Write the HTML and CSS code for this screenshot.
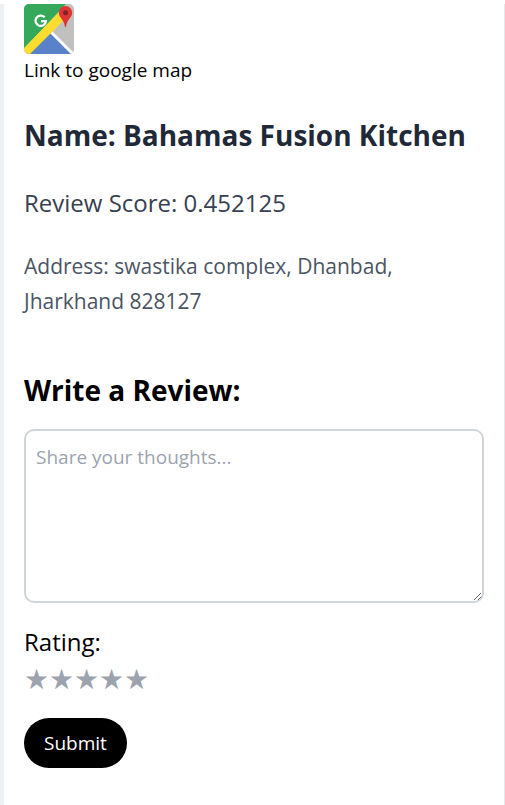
FILE: index.html
```html
<!DOCTYPE html>
<html lang="en">
<head>
<meta charset="utf-8">
<meta name="viewport" content="width=device-width, initial-scale=1">
<title>Bahamas Fusion Kitchen</title>
<link rel="stylesheet" href="styles.css">
</head>
<body>
<main class="panel">
  <a class="map-link" href="#map">
    <svg class="map-icon" viewBox="0 0 50 50" aria-hidden="true">
      <defs><clipPath id="tile"><rect width="50" height="50" rx="5"/></clipPath></defs>
      <g clip-path="url(#tile)">
        <path fill="#c2c0be" d="M0 0h50v50H0z"/>
        <path fill="#36a85a" d="M0 0h42L0 45z"/>
        <path fill="#5a82c9" d="M25 26 50 51H0z"/>
        <path fill="none" stroke="#fff" stroke-width="3" d="m25 26 26 26"/>
        <path fill="#fddc30" d="M36 7 0 44v6h6L44 12z"/>
      </g>
      <path fill="none" stroke="#fff" stroke-width="2.2" d="M20.600 13.300a5.200 5.200 0 1 0 1.300 3.800H17"/>
      <path fill="#df3434" d="M41.500 2a6.700 6.700 0 0 1 6.700 6.700c0 4.800-5.200 6.300-6.200 14.300h-1c-1-8-6.200-9.500-6.200-14.300A6.700 6.700 0 0 1 41.500 2z"/>
      <circle cx="41.500" cy="8.700" r="2.500" fill="#7d2426"/>
    </svg>
    <span>Link to google map</span>
  </a>
  <h1 class="name">Name: Bahamas Fusion Kitchen</h1>
  <p class="score">Review Score: 0.452125</p>
  <p class="address">Address: swastika complex, Dhanbad, Jharkhand 828127</p>
  <form class="review">
    <h2 class="review-title"><label for="thoughts">Write a Review:</label></h2>
    <textarea class="thoughts" id="thoughts" placeholder="Share your thoughts..."></textarea>
    <p class="rating-label" id="rating">Rating:</p>
    <div class="stars" role="group" aria-labelledby="rating">
      <button class="star" type="button">★</button>
      <button class="star" type="button">★</button>
      <button class="star" type="button">★</button>
      <button class="star" type="button">★</button>
      <button class="star" type="button">★</button>
    </div>
    <button class="submit" type="submit">Submit</button>
  </form>
</main>
</body>
</html>
```

FILE: styles.css
```css
* {
  box-sizing: border-box;
  margin: 0;
}

body {
  padding-top: 4px;
  background: #fff;
  color: #000;
  font-family: "Segoe UI", "Open Sans", "Noto Sans", sans-serif;
  font-size: 19px;
  line-height: 32px;
}

.panel {
  min-height: calc(100vh - 4px);
  padding: 0 20px;
  border-left: 4px solid #eeeff1;
  border-right: 1px solid #e5e7eb;
}

.map-link {
  display: block;
  color: inherit;
  text-decoration: none;
}

.map-icon {
  display: block;
  width: 50px;
  height: 50px;
}

.name,
.review-title {
  font-size: 28px;
  font-weight: 700;
  line-height: 40px;
}

.name {
  margin-top: 29px;
  color: #1f2937;
}

.score {
  margin-top: 30px;
  color: #374151;
  font-size: 24px;
  line-height: 36px;
}

.address {
  margin-top: 28px;
  color: #4b5563;
  font-size: 21px;
  line-height: 35px;
}

.review-title {
  margin-top: 51px;
}

.thoughts {
  display: block;
  width: 100%;
  height: 174px;
  margin-top: 19px;
  padding: 10px;
  border: 2px solid #d1d5db;
  border-radius: 10px;
  background: #fff;
  color: inherit;
  font: inherit;
  resize: vertical;
}

.thoughts::placeholder {
  color: #9ca3af;
}

.rating-label {
  margin-top: 21px;
  font-size: 24px;
  font-weight: 500;
  line-height: 36px;
}

.stars {
  display: flex;
}

.star {
  width: 25px;
  padding: 0;
  border: 0;
  background: none;
  color: #9ca3af;
  font-family: "DejaVu Sans", sans-serif;
  font-size: 28px;
  line-height: 40px;
}

.submit {
  margin-top: 18px;
  padding: 10px 20px;
  border: 0;
  border-radius: 25px;
  background: #000;
  color: #fff;
  font: inherit;
  line-height: 30px;
}
```
